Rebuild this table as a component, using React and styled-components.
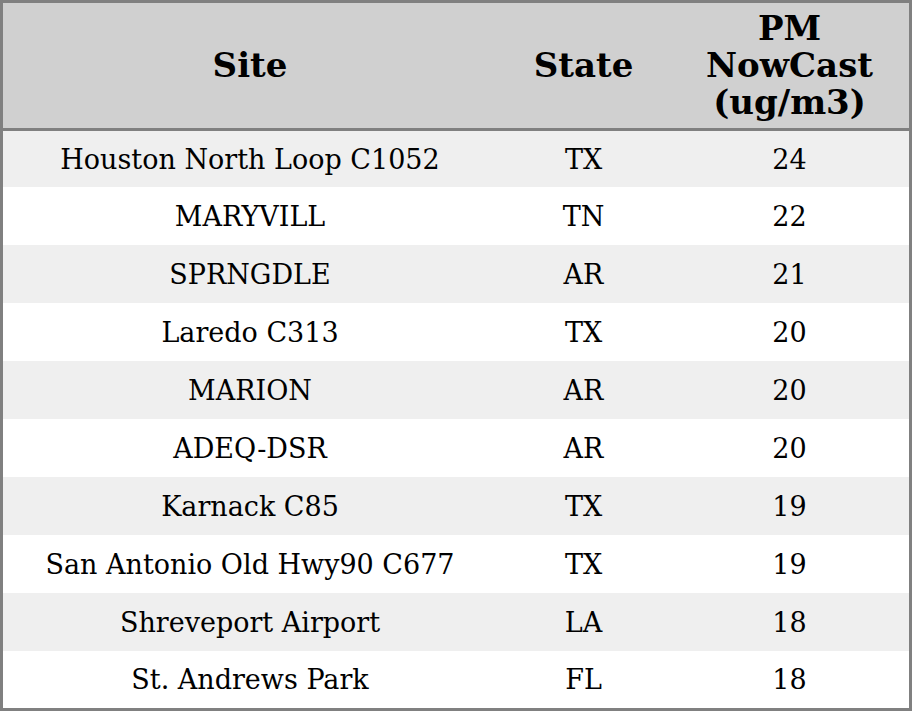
import React from 'react';
import styled, { createGlobalStyle } from 'styled-components';

const GlobalStyle = createGlobalStyle`
  html, body {
    margin: 0;
    padding: 0;
    background: #ffffff;
  }
`;

const Table = styled.div`
  width: 912px;
  height: 711px;
  box-sizing: border-box;
  border: 3px solid #808080;
  display: grid;
  grid-template-columns: 494px 173px 239px;
  grid-template-rows: 128px 56px repeat(8, 58px) 57px;
  font-family: "DejaVu Serif", serif;
  color: #000000;
`;

const HeadCell = styled.div`
  background: #d0d0d0;
  border-bottom: 3px solid #808080;
  display: flex;
  align-items: center;
  justify-content: center;
  text-align: center;
  font-size: 34px;
  font-weight: 700;
  line-height: 37px;
  padding: 0 10px;
`;

const Cell = styled.div`
  background: ${(p) => (p.$odd ? '#efefef' : '#ffffff')};
  display: flex;
  align-items: center;
  justify-content: center;
  font-size: 27px;
`;

const rows = [
  ['Houston North Loop C1052', 'TX', 24],
  ['MARYVILL', 'TN', 22],
  ['SPRNGDLE', 'AR', 21],
  ['Laredo C313', 'TX', 20],
  ['MARION', 'AR', 20],
  ['ADEQ-DSR', 'AR', 20],
  ['Karnack C85', 'TX', 19],
  ['San Antonio Old Hwy90 C677', 'TX', 19],
  ['Shreveport Airport', 'LA', 18],
  ['St. Andrews Park', 'FL', 18],
];

export default function App() {
  return (
    <>
      <GlobalStyle />
      <Table>
        <HeadCell>Site</HeadCell>
        <HeadCell>State</HeadCell>
        <HeadCell>PM<br />NowCast<br />(ug/m3)</HeadCell>
        {rows.map((r, i) => (
          <React.Fragment key={i}>
            <Cell $odd={i % 2 === 0}>{r[0]}</Cell>
            <Cell $odd={i % 2 === 0}>{r[1]}</Cell>
            <Cell $odd={i % 2 === 0}>{r[2]}</Cell>
          </React.Fragment>
        ))}
      </Table>
    </>
  );
}
